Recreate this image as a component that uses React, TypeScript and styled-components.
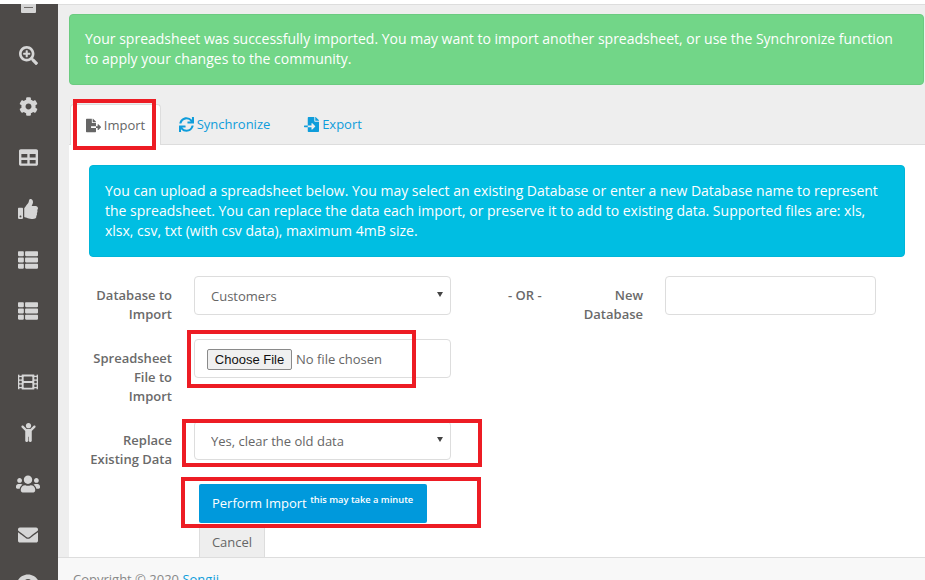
import React from "react";
import styled, { createGlobalStyle } from "styled-components";
import {
  FaSearchPlus, FaCog, FaTable, FaThumbsUp, FaThList, FaFilm, FaChild,
  FaUsers, FaEnvelope, FaUserCircle, FaFileExport, FaFileImport, FaSync,
} from "react-icons/fa";

const Global = createGlobalStyle`
  html, body { margin: 0; padding: 0; width: 925px; height: 580px; overflow: hidden; background: #fff; }
  body { font-family: "Open Sans", "Liberation Sans", sans-serif; font-size: 13px; color: #666; }
  * { box-sizing: border-box; }
`;

const Page = styled.div`
  position: relative;
  width: 925px;
  height: 580px;
  overflow: hidden;
  display: flex;
  flex-direction: column;
`;
const TopStrip = styled.div`
  height: 4px;
  flex: none;
  background: #fff;
`;
const Body = styled.div`
  flex: 1;
  display: flex;
  min-height: 0;
`;
const Sidebar = styled.nav`
  width: 58px;
  flex: none;
  background: #4d4a48;
  overflow: hidden;
  display: flex;
  flex-direction: column;
  align-items: center;
  padding-right: 2px;
  color: #d6d6d6;
`;
const SideIcon = styled.div<{ $size?: number; $gap?: number }>`
  height: 51px;
  flex: none;
  display: flex;
  align-items: center;
  justify-content: center;
  font-size: ${(p) => p.$size ?? 19}px;
  margin-bottom: ${(p) => p.$gap ?? 0}px;
`;
const ClippedNote = styled.div`
  width: 15px;
  height: 9px;
  margin-bottom: 17px;
  flex: none;
  background: #d6d6d6;
  border-radius: 0 0 1px 1px;
  display: flex;
  justify-content: center;
  align-items: flex-start;
  padding-top: 3px;
  &::before {
    content: "";
    width: 9px;
    height: 1px;
    background: #6d6a68;
  }
`;
const Main = styled.main`
  flex: 1;
  min-width: 0;
  background: #eee;
  border-top: 1px solid #ddd;
  display: flex;
  flex-direction: column;
`;
const Content = styled.div`
  flex: none;
  height: 552px;
  padding: 9px 0 0 11px;
  display: flex;
  flex-direction: column;
  overflow: hidden;
`;
const SuccessAlert = styled.div`
  width: 855px;
  height: 71px;
  flex: none;
  background: #72d688;
  border: 1px solid #6bcb80;
  border-radius: 4px;
  color: #fff;
  font-size: 14px;
  line-height: 20px;
  padding: 14px 15px;
  white-space: nowrap;
`;
const TabBar = styled.div`
  margin-top: 19px;
  height: 41px;
  flex: none;
  display: flex;
  padding-left: 1px;
  border-bottom: 1px solid #ddd;
`;
const Tab = styled.div<{ $active?: boolean; $w: number }>`
  width: ${(p) => p.$w}px;
  height: ${(p) => (p.$active ? 41 : 40)}px;
  display: flex;
  align-items: center;
  justify-content: center;
  gap: 3px;
  font-size: 13px;
  color: ${(p) => (p.$active ? "#666" : "#0f9ddb")};
  background: ${(p) => (p.$active ? "#fff" : "transparent")};
  border: ${(p) => (p.$active ? "1px solid #ddd" : "none")};
  border-bottom: none;
  border-radius: 4px 4px 0 0;
  svg { font-size: 15px; flex: none; }
`;
const Panel = styled.section`
  flex: 1;
  background: #fff;
  padding: 20px 20px 0 20px;
  min-height: 0;
`;
const InfoBox = styled.div`
  width: 816px;
  height: 92px;
  background: #00bee2;
  border-radius: 4px;
  border: 1px solid #00b5d8;
  color: #fff;
  font-size: 14px;
  line-height: 20px;
  padding: 15px;
  white-space: nowrap;
`;
const Form = styled.form`
  margin-top: 19px;
  display: flex;
  flex-direction: column;
  gap: 15px;
`;
const Row = styled.div`
  display: grid;
  grid-template-columns: 83px 279px 122px 70px 22px 211px;
`;
const Label = styled.label`
  font-weight: 600;
  font-size: 13px;
  line-height: 19px;
  color: #6a6a6a;
  text-align: right;
  padding-top: 10px;
`;
const FieldCell = styled.div`
  position: relative;
  margin-left: 22px;
  width: 257px;
  height: 39px;
`;
const NativeSelect = styled.select`
  display: block;
  appearance: none;
  width: 257px;
  height: 39px;
  border: 1px solid #ddd;
  border-radius: 4px;
  background: #fff;
  color: #666;
  font-family: "Open Sans", sans-serif;
  font-size: 13px;
  padding-left: 16px;
  outline: none;
`;
const Caret = styled.svg`
  position: absolute;
  right: 8px;
  top: 16px;
  width: 6px;
  height: 5px;
  fill: #444;
  pointer-events: none;
`;
const FileBox = styled.div`
  width: 257px;
  height: 39px;
  border: 1px solid #ddd;
  border-radius: 4px;
  display: flex;
  align-items: center;
  padding: 1px 0 0 12px;
  input {
    font-family: "Open Sans", sans-serif;
    font-size: 13px;
    color: #666;
    width: 230px;
  }
  input::file-selector-button {
    font-family: "Liberation Sans", sans-serif;
    font-size: 13px;
    width: 85px;
    height: 21px;
    padding: 0;
    color: #111;
    background: #f0f0f0;
    border: 1px solid #8a8a8a;
    border-radius: 2px;
  }
`;
const OrText = styled.div`
  font-weight: 600;
  font-size: 13px;
  line-height: 19px;
  color: #6a6a6a;
  padding: 10px 0 0 57px;
  white-space: nowrap;
`;
const Gap = styled.div``;
const TextInput = styled.input`
  display: block;
  width: 211px;
  height: 39px;
  border: 1px solid #ddd;
  border-radius: 4px;
  outline: none;
`;
const Actions = styled.div`
  margin-left: 110px;
  display: flex;
  flex-direction: column;
  align-items: flex-start;
`;
const PrimaryButton = styled.button`
  width: 228px;
  height: 39px;
  background: #0099dc;
  border: none;
  border-radius: 2px;
  color: #fff;
  font-family: "Open Sans", sans-serif;
  font-size: 13px;
  font-weight: 500;
  padding: 0 0 2px 13px;
  text-align: left;
  white-space: nowrap;
  sup { font-size: 9.3px; font-weight: 600; line-height: 0; vertical-align: 5px; }
`;
const CancelButton = styled.button`
  width: 66px;
  height: 34px;
  margin-top: 1px;
  background: #eee;
  border: 1px solid #ddd;
  border-bottom: none;
  border-radius: 2px 2px 0 0;
  color: #666;
  font-family: "Open Sans", sans-serif;
  font-size: 13px;
  padding: 0;
`;
const Footer = styled.footer`
  position: absolute;
  left: 58px;
  right: 0;
  top: 557px;
  height: 23px;
  background: #f8f8f8;
  border-top: 1px solid #ddd;
  padding: 12px 0 0 15px;
  font-size: 13px;
  line-height: 18px;
  color: #888;
  a { color: #0f9ddb; text-decoration: none; }
`;
const Callout = styled.div<{ $x: number; $y: number; $w: number; $h: number }>`
  position: absolute;
  left: ${(p) => p.$x}px;
  top: ${(p) => p.$y}px;
  width: ${(p) => p.$w}px;
  height: ${(p) => p.$h}px;
  border: 4px solid #ed1c24;
  pointer-events: none;
`;

const SelectCaret = () => (
  <Caret viewBox="0 0 6 5"><path d="M0 0h6L3 5z" /></Caret>
);

export default function App() {
  return (
    <Page>
      <Global />
      <TopStrip />
      <Body>
        <Sidebar>
          <ClippedNote />
          <SideIcon><FaSearchPlus /></SideIcon>
          <SideIcon><FaCog /></SideIcon>
          <SideIcon><FaTable /></SideIcon>
          <SideIcon $size={20}><FaThumbsUp /></SideIcon>
          <SideIcon $size={20}><FaThList /></SideIcon>
          <SideIcon $size={20} $gap={20}><FaThList /></SideIcon>
          <SideIcon $size={20}><FaFilm /></SideIcon>
          <SideIcon><FaChild /></SideIcon>
          <SideIcon $size={24}><FaUsers /></SideIcon>
          <SideIcon $size={20}><FaEnvelope /></SideIcon>
          <SideIcon $size={24}><FaUserCircle /></SideIcon>
        </Sidebar>
        <Main>
          <Content>
            <SuccessAlert>
              Your spreadsheet was successfully imported. You may want to import another spreadsheet, or use the Synchronize function<br />
              to apply your changes to the community.
            </SuccessAlert>
            <TabBar>
              <Tab $active $w={91}><FaFileExport /> Import</Tab>
              <Tab $w={127}><FaSync /> Synchronize</Tab>
              <Tab $w={90}><FaFileImport /> Export</Tab>
            </TabBar>
            <Panel>
              <InfoBox>
                You can upload a spreadsheet below. You may select an existing Database or enter a new Database name to represent<br />
                the spreadsheet. You can replace the data each import, or preserve it to add to existing data. Supported files are: xls,<br />
                xlsx, csv, txt (with csv data), maximum 4mB size.
              </InfoBox>
              <Form>
                <Row>
                  <Label>Database to Import</Label>
                  <FieldCell>
                    <NativeSelect defaultValue="Customers"><option>Customers</option></NativeSelect>
                    <SelectCaret />
                  </FieldCell>
                  <OrText>- OR -</OrText>
                  <Label>New Database</Label>
                  <Gap />
                  <TextInput />
                </Row>
                <Row>
                  <Label>Spreadsheet File to Import</Label>
                  <FieldCell>
                    <FileBox><input type="file" /></FileBox>
                  </FieldCell>
                </Row>
                <Row>
                  <Label>Replace Existing Data</Label>
                  <FieldCell>
                    <NativeSelect defaultValue="Yes, clear the old data"><option>Yes, clear the old data</option></NativeSelect>
                    <SelectCaret />
                  </FieldCell>
                </Row>
                <Actions>
                  <PrimaryButton type="button">Perform Import <sup>this may take a minute</sup></PrimaryButton>
                  <CancelButton type="button">Cancel</CancelButton>
                </Actions>
              </Form>
            </Panel>
          </Content>
        </Main>
      </Body>
      <Footer>Copyright © 2020 <a href="#">Songii</a></Footer>
      <Callout $x={73} $y={99} $w={83} $h={51} />
      <Callout $x={187} $y={330} $w={229} $h={58} />
      <Callout $x={182} $y={419} $w={300} $h={48} />
      <Callout $x={181} $y={477} $w={300} $h={51} />
    </Page>
  );
}
